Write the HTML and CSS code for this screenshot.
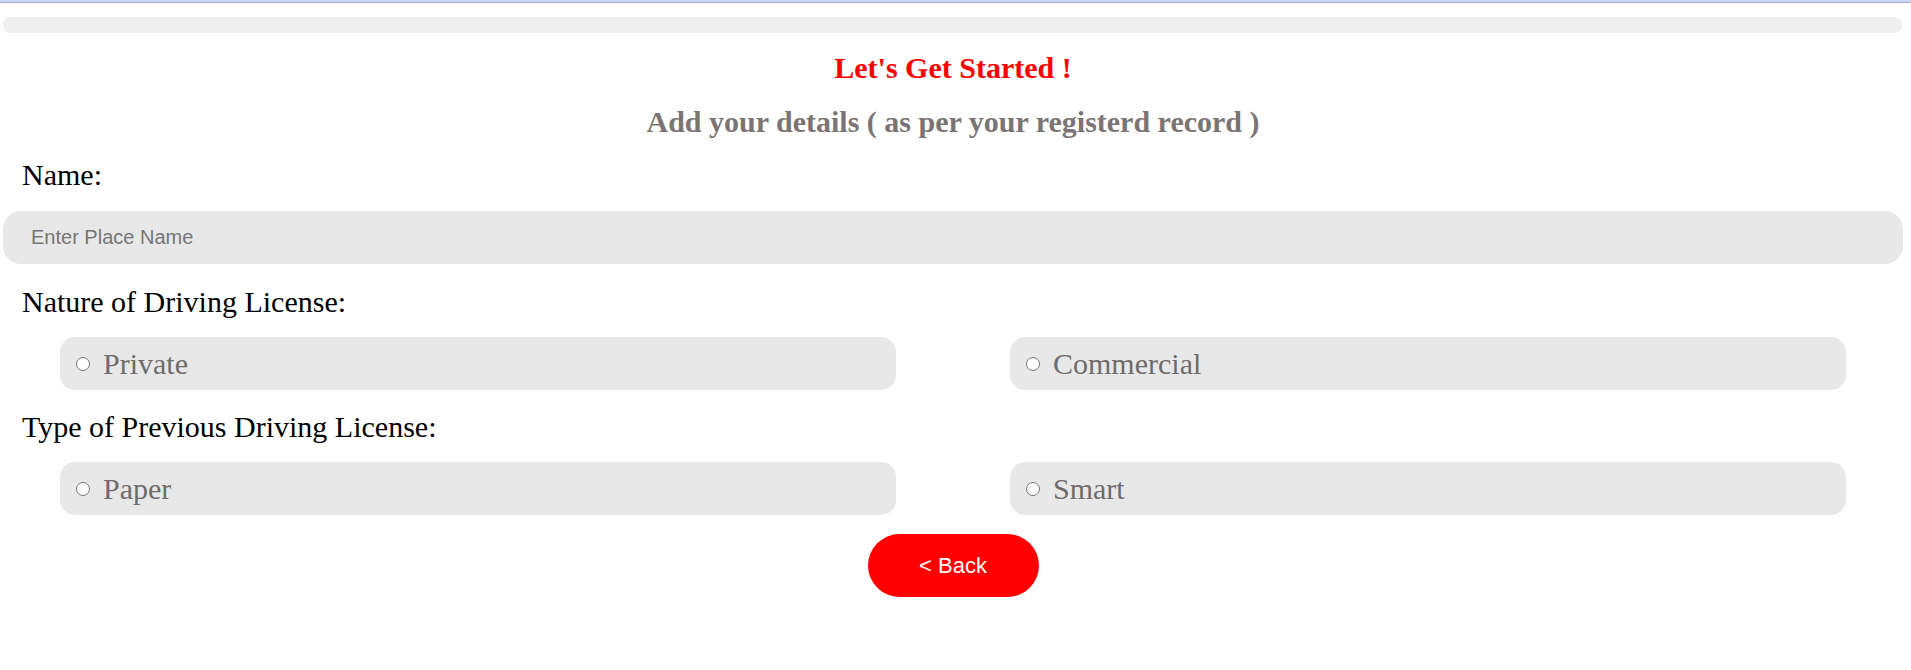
FILE: index.html
```html
<!DOCTYPE html>
<html lang="en">
<head>
<meta charset="utf-8">
<title>Let's Get Started</title>
<link rel="stylesheet" href="styles.css">
</head>
<body>
<div class="topline"></div>
<div class="page">
  <div class="progress"></div>
  <h2 class="title">Let's Get Started !</h2>
  <h3 class="subtitle">Add your details ( as per your registerd record )</h3>

  <div class="label label-first">Name:</div>
  <input class="text-input" type="text" placeholder="Enter Place Name">

  <div class="label label-nature">Nature of Driving License:</div>
  <div class="options">
    <label class="option"><input type="radio" name="nature" class="radio"><span>Private</span></label>
    <label class="option"><input type="radio" name="nature" class="radio"><span>Commercial</span></label>
  </div>

  <div class="label label-type">Type of Previous Driving License:</div>
  <div class="options">
    <label class="option"><input type="radio" name="type" class="radio"><span>Paper</span></label>
    <label class="option"><input type="radio" name="type" class="radio"><span>Smart</span></label>
  </div>

  <div class="actions">
    <button class="back-btn" type="button">&lt; Back</button>
  </div>
</div>
</body>
</html>
```

FILE: styles.css
```css
html, body {
  margin: 0;
  padding: 0;
  background: #ffffff;
}

body {
  font-family: "Liberation Serif", "Times New Roman", serif;
  color: #000000;
}

.topline {
  height: 2px;
  background: #c8d7ef;
  border-bottom: 1px solid #9cb2d9;
}

.page {
  padding: 0 8px 0 3px;
}

.progress {
  margin: 14px 1px 0 0;
  height: 16px;
  background: #efefef;
  border-radius: 8px;
}

.title {
  margin: 18px 0 0;
  font-size: 30px;
  line-height: 34px;
  font-weight: bold;
  color: #ff0000;
  text-align: center;
}

.subtitle {
  margin: 20px 0 0;
  font-size: 30px;
  line-height: 34px;
  font-weight: bold;
  color: #7b7474;
  text-align: center;
}

.label {
  margin: 19px 0 0 19px;
  font-size: 30px;
  line-height: 34px;
  color: #000000;
}

.label-nature {
  margin-top: 21px;
}

.label-type {
  margin-top: 20px;
}

.text-input {
  display: block;
  box-sizing: border-box;
  width: 100%;
  height: 53px;
  margin: 19px 0 0;
  padding: 0 0 0 28px;
  border: 0;
  outline: none;
  border-radius: 18px;
  background: #e8e8e8;
  font-family: "Liberation Sans", Arial, sans-serif;
  font-size: 20px;
  color: #333333;
}

.text-input::placeholder {
  color: #757575;
}

.options {
  display: grid;
  grid-template-columns: 1fr 1fr;
  margin-top: 18px;
}

.option {
  box-sizing: border-box;
  margin-left: 57px;
  width: 88%;
  height: 53px;
  display: flex;
  align-items: center;
  gap: 13px;
  padding-left: 16px;
  background: #e8e8e8;
  border-radius: 15px;
  font-size: 30px;
  line-height: 34px;
  color: #6f6b6b;
  cursor: pointer;
}

.radio {
  appearance: none;
  -webkit-appearance: none;
  box-sizing: border-box;
  width: 14px;
  height: 14px;
  margin: 1px 0 0;
  border: 1px solid #767676;
  border-radius: 50%;
  background: #ffffff;
  flex: none;
}

.actions {
  display: flex;
  justify-content: center;
  margin-top: 19px;
}

.back-btn {
  width: 171px;
  height: 63px;
  border: 0;
  border-radius: 32px;
  background: #ff0000;
  color: #ffffff;
  font-family: "Liberation Sans", Arial, sans-serif;
  font-size: 22px;
  cursor: pointer;
}
```
